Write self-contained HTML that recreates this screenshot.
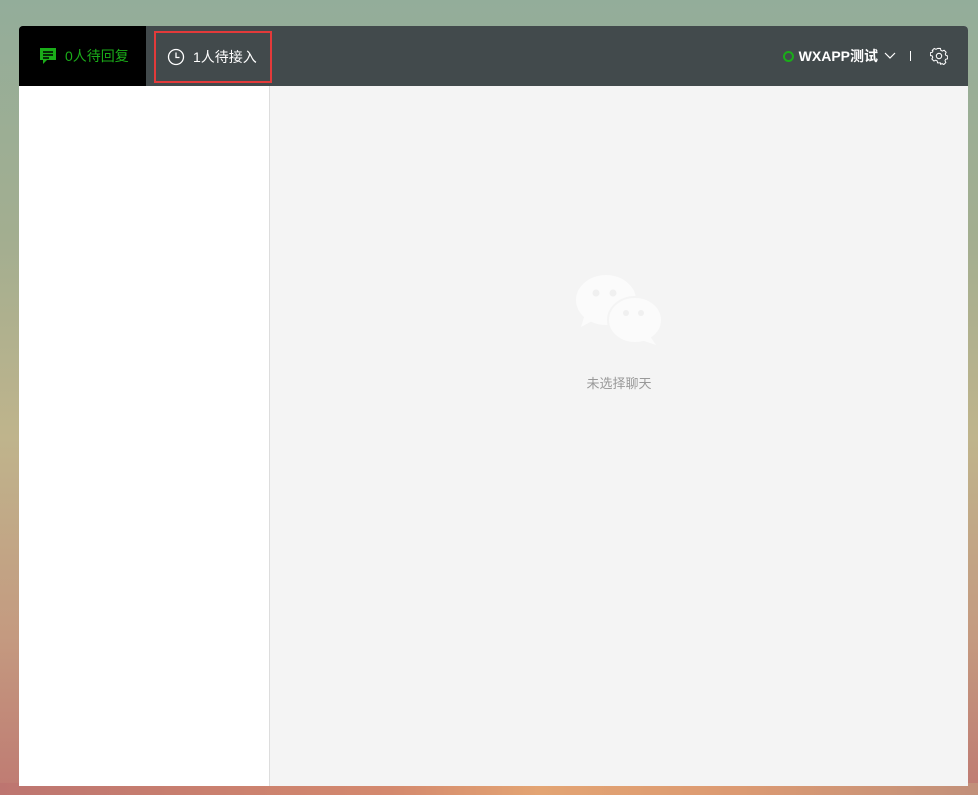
<!DOCTYPE html>
<html><head><meta charset="utf-8"><style>
*{margin:0;padding:0;box-sizing:border-box}
body{width:978px;height:795px;overflow:hidden;position:relative;font-family:"Liberation Sans","Noto Sans CJK SC",sans-serif;
background:linear-gradient(180deg,#93ad9a 0%,#a3ae90 30%,#bfb48c 55%,#c49a80 80%,#bf7a72 100%);}
.bot{position:absolute;left:0;right:0;bottom:0;height:12px;background:linear-gradient(90deg,#bd7570 0%,#d4896e 40%,#e3a473 55%,#dc9a72 75%,#c2907a 100%)}
.win{position:absolute;left:19px;top:26px;width:949px;height:760px;border-radius:4px 4px 0 0;overflow:hidden;background:#f4f4f4}
.hd{height:60px;background:#424a4c;position:relative;color:#fff}
.t1{position:absolute;left:0;top:0;width:127px;height:60px;background:#000;color:#1aad19;font-size:14px;display:flex;align-items:center;padding-left:20px;gap:8px}
.t2{position:absolute;left:135px;top:5px;width:118px;height:52px;border:2px solid #e33a3a;font-size:14px;display:flex;align-items:center;padding-left:11px;gap:8px;color:#fff}
.rt{position:absolute;right:20px;top:0;height:60px;display:flex;align-items:center;font-size:14px;font-weight:bold}
.dot{width:11px;height:11px;border:2px solid #1aad19;border-radius:50%;margin-right:5px}
.left{position:absolute;left:0;top:60px;width:251px;height:700px;background:#fff;border-right:1px solid #ddd}
.ic{position:absolute;left:556px;top:248px}
.tip{position:absolute;left:555px;top:347px;font-size:13px;color:#999;width:90px;text-align:center}
</style></head><body>
<div class="bot"></div>
<div class="win">
<div class="hd">
<div class="t1"><svg width="18" height="18" viewBox="0 0 18 18"><path d="M1 1h16v12H8l-4 4v-4H1z" fill="#1aad19"/><path d="M4 5h10M4 8h10M4 11h6" stroke="#000" stroke-width="1.5"/></svg>0人待回复</div>
<div class="t2"><svg width="18" height="18" viewBox="0 0 18 18"><circle cx="9" cy="9" r="7.5" fill="none" stroke="#fff" stroke-width="1.3"/><path d="M9 4.5V9.5h3.5" fill="none" stroke="#fff" stroke-width="1.3"/></svg>1人待接入</div>
<div class="rt"><span class="dot"></span>WXAPP测试<svg width="14" height="10" viewBox="0 0 14 10" style="margin-left:5px"><path d="M2 2l5 5 5-5" fill="none" stroke="#fff" stroke-width="1.2"/></svg><span style="display:inline-block;width:1px;height:10px;background:#fff;margin:0 19px 0 13px"></span><svg width="18" height="18" viewBox="0 0 24 24"><path d="M10 2h4l.6 2.7 2 1 2.5-1.2 2.8 2.8-1.2 2.5 1 2 2.3.6v4l-2.7.6-1 2 1.2 2.5-2.8 2.8-2.5-1.2-2 1L14 22h-4l-.6-2.7-2-1-2.5 1.2-2.8-2.8 1.2-2.5-1-2L0 12v-0.1 0-4l2.7-.6 1-2L2.5 4.8 5.3 2 7.8 3.2l2-1z" transform="translate(0.5 0) scale(0.96)" fill="none" stroke="#fff" stroke-width="1.4" stroke-linejoin="round"/><circle cx="12" cy="12" r="3.6" fill="none" stroke="#fff" stroke-width="1.4"/></svg></div>
</div>
<div class="left"></div>
<svg class="ic" width="90" height="72" viewBox="0 0 90 72"><ellipse cx="31" cy="26" rx="30" ry="25" fill="#fbfbfb"/><path d="M10 40l-4 13 15-8z" fill="#fbfbfb"/><circle cx="21" cy="19" r="3.5" fill="#f0f0f0"/><circle cx="38" cy="19" r="3.5" fill="#f0f0f0"/><ellipse cx="60" cy="46" rx="27" ry="23" fill="#fbfbfb" stroke="#f4f4f4" stroke-width="2"/><path d="M75 62l6 9-15-5z" fill="#fbfbfb"/><circle cx="51" cy="39" r="3" fill="#f0f0f0"/><circle cx="66" cy="39" r="3" fill="#f0f0f0"/></svg>
<div class="tip">未选择聊天</div>
</div>
</body></html>
